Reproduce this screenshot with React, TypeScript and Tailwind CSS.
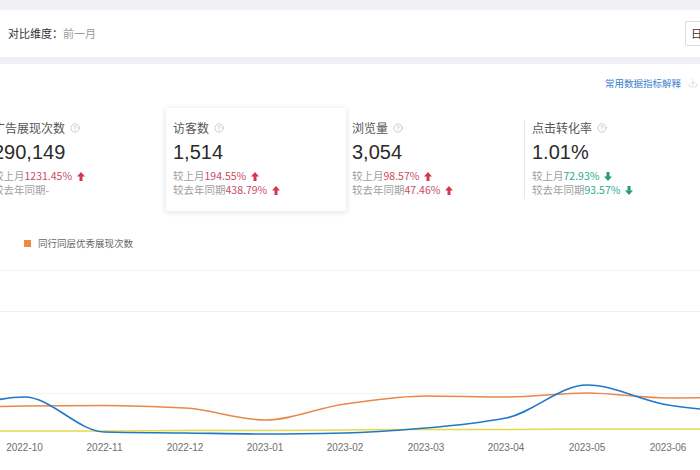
import React from "react";
import { CircleHelp, Download } from "lucide-react";

type Pt = [number, number];

// monotone cubic curve through points (no overshoot, like the chart lib)
function smooth(pts: Pt[]) {
  const n = pts.length;
  const dx: number[] = [];
  const slope: number[] = [];
  for (let i = 0; i < n - 1; i++) {
    dx[i] = pts[i + 1][0] - pts[i][0];
    slope[i] = (pts[i + 1][1] - pts[i][1]) / dx[i];
  }
  const m: number[] = [];
  m[0] = slope[0];
  m[n - 1] = slope[n - 2];
  for (let i = 1; i < n - 1; i++) {
    if (slope[i - 1] * slope[i] <= 0) m[i] = 0;
    else {
      const w1 = 2 * dx[i] + dx[i - 1];
      const w2 = dx[i] + 2 * dx[i - 1];
      m[i] = (w1 + w2) / (w1 / slope[i - 1] + w2 / slope[i]);
    }
  }
  let d = `M${pts[0][0]},${pts[0][1]}`;
  for (let i = 0; i < n - 1; i++) {
    const h = dx[i] / 3;
    d += ` C${pts[i][0] + h},${pts[i][1] + m[i] * h} ${pts[i + 1][0] - h},${pts[i + 1][1] - m[i + 1] * h} ${pts[i + 1][0]},${pts[i + 1][1]}`;
  }
  return d;
}

const xs = [-56, 24.5, 104.5, 185, 265, 345, 426, 506, 587, 668, 748];
const labels = ["2022-10", "2022-11", "2022-12", "2023-01", "2023-02", "2023-03", "2023-04", "2023-05", "2023-06"];

const blue = [412, 397, 432, 433, 434, 433, 428, 418, 385, 405, 414];
const orange = [408, 406, 405.5, 408, 420, 404, 396, 397, 393, 398, 397];
const yellow = [431, 431, 431, 430.5, 430.5, 430, 429.5, 429.5, 429, 429, 429];

const toPts = (ys: number[]): Pt[] => ys.map((y, i) => [xs[i], y]);

interface Metric {
  title: string;
  value: string;
  mom: string;
  yoy: string;
  down?: boolean;
}

const metrics: Metric[] = [
  { title: "广告展现次数", value: "290,149", mom: "1231.45%", yoy: "-" },
  { title: "访客数", value: "1,514", mom: "194.55%", yoy: "438.79%" },
  { title: "浏览量", value: "3,054", mom: "98.57%", yoy: "47.46%" },
  { title: "点击转化率", value: "1.01%", mom: "72.93%", yoy: "93.57%", down: true },
];

function Arrow({ down }: { down?: boolean }) {
  return (
    <svg width="8" height="9" viewBox="0 0 8 9" className="ml-[5px] inline-block">
      {down ? (
        <path d="M4 9 L8 4.5 H5.5 V0 H2.5 V4.5 H0 Z" fill="#22a070" />
      ) : (
        <path d="M4 0 L8 4.5 H5.5 V9 H2.5 V4.5 H0 Z" fill="#d2384e" />
      )}
    </svg>
  );
}

function Change({ label, val, down }: { label: string; val: string; down?: boolean }) {
  const hasVal = val !== "-";
  return (
    <div className="flex items-center h-[14px] text-[10.5px] leading-[14px] text-[#a0a0a0] whitespace-nowrap">
      <span>{label}</span>
      {hasVal ? (
        <>
          <span className={down ? "text-[#2aa98f]" : "text-[#c94a60]"}>{val}</span>
          <Arrow down={down} />
        </>
      ) : (
        <span>-</span>
      )}
    </div>
  );
}

function Card({ m, className, inner }: { m: Metric; className: string; inner: string }) {
  return (
    <div className={`h-[103px] py-[12px] shrink-0 ${className}`}>
      <div className={`h-full ${inner}`}>
        <div className="flex items-center h-4 text-[12px] leading-4 text-[#555] whitespace-nowrap">
          {m.title}
          <CircleHelp className="ml-[5px] w-[10px] h-[10px] text-[#b5b5b5]" strokeWidth={1.6} />
        </div>
        <div className="mt-[4px] h-6 leading-6 text-[20px] text-[#2b2b2b] font-['Liberation_Sans',sans-serif]">
          {m.value}
        </div>
        <div className="mt-[5px]">
          <Change label="较上月" val={m.mom} down={m.down} />
          <Change label="较去年同期" val={m.yoy} down={m.down} />
        </div>
      </div>
    </div>
  );
}

export default function App() {
  return (
    <div className="w-[700px] h-[470px] overflow-hidden bg-white font-['Noto_Sans_CJK_SC','Noto_Sans',sans-serif]">
      {/* top filter bar */}
      <div className="h-[10px] bg-[#f0f1f4]" />
      <div className="h-[47px] flex items-center justify-between pl-2">
        <div className="text-[11px] whitespace-nowrap">
          <span className="text-[#333]">对比维度：</span>
          <span className="text-[#9a9a9a]">前一月</span>
        </div>
        <div className="w-[15px] h-[25px] border border-r-0 border-[#dcdcdc] rounded-l-[2px] pl-[5px] text-[11px] leading-[23px] text-[#333] overflow-hidden">
          日
        </div>
      </div>
      <div className="h-[7px] bg-[#f0f1f4]" />

      {/* header link */}
      <div className="h-5 mt-[9px] flex items-center justify-end pr-[2px]">
        <span className="text-[9.5px] text-[#3a7ecb] whitespace-nowrap">常用数据指标解释</span>
        <Download className="ml-[7px] w-[10px] h-[10px] text-[#cfcfcf]" strokeWidth={1.6} />
      </div>

      {/* metric cards */}
      <div className="mt-[15px] flex">
        <Card m={metrics[0]} className="w-[180px] -ml-[14px]" inner="pl-[7px]" />
        <Card
          m={metrics[1]}
          className="w-[180px] bg-white shadow-[0_1px_6px_rgba(0,0,0,0.13)]"
          inner="pl-[7px]"
        />
        <Card m={metrics[2]} className="w-[178px]" inner="pl-[6px]" />
        <Card m={metrics[3]} className="flex-1" inner="pl-[7px] border-l border-[#e6e6e6]" />
      </div>

      {/* legend */}
      <div className="mt-[24px] h-4 flex items-center pl-[24px]">
        <span className="w-[7px] h-[7px] bg-[#ee8a45]" />
        <span className="ml-[7px] text-[9.5px] text-[#666] whitespace-nowrap">同行同层优秀展现次数</span>
      </div>

      {/* chart */}
      <svg width="700" height="200" viewBox="0 270 700 200" className="block mt-[19px]">
        <line x1="0" y1="270.5" x2="700" y2="270.5" stroke="#f2f2f2" />
        <line x1="0" y1="311.5" x2="700" y2="311.5" stroke="#f0f0f0" />
        <line x1="0" y1="393.5" x2="700" y2="393.5" stroke="#f3f3f3" />
        <path d={smooth(toPts(yellow))} fill="none" stroke="#e3db4c" strokeWidth="1.6" />
        <path d={smooth(toPts(orange))} fill="none" stroke="#e9884a" strokeWidth="1.6" />
        <path d={smooth(toPts(blue))} fill="none" stroke="#1f78c9" strokeWidth="1.6" />
        {labels.map((l, i) => (
          <text
            key={l}
            x={xs[i + 1]}
            y="451"
            textAnchor="middle"
            fontSize="10"
            fill="#6f6f6f"
            fontFamily="'Liberation Sans', sans-serif"
          >
            {l}
          </text>
        ))}
      </svg>
    </div>
  );
}
